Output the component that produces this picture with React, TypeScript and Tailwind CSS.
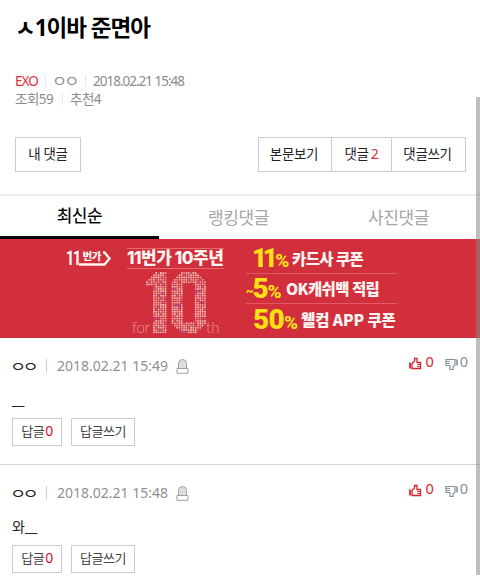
import type { ReactNode } from "react";

const SANS = "font-['Noto_Sans','Noto_Sans_CJK_KR',sans-serif]";

const DOT_COLORS = ["#f3b7ae", "#f0a9a2", "#f7cfc6", "#e58d96", "#b25a92", "#efb39a", "#f5c3bd"];

// Dot matrix for the "10" artwork, 26 columns x 27 rows
function isLit(col: number, row: number) {
    if (col < 9) {
        if (row < 6) return col >= Math.max(0, 4 - row);
        return col >= 3;
    }
    if (col < 11) return false;
    const edge = Math.min(row, 26 - row);
    const inset = Math.max(0, 4 - edge);
    const x = col - 11;
    if (x < inset || x > 14 - inset) return false;
    return !(x > 4 && x < 10 && edge > 4);
}

function DotTen() {
    const dots: ReactNode[] = [];
    for (let row = 0; row < 27; row++) {
        for (let col = 0; col < 26; col++) {
            if (!isLit(col, row)) continue;
            dots.push(
                <circle
                    key={`${col}-${row}`}
                    cx={1 + col * 2.32}
                    cy={1 + row * 2.28}
                    r={0.95}
                    fill={DOT_COLORS[(col * 5 + row * 11 + ((col * row) % 6)) % 7]}
                />
            );
        }
    }
    return (
        <svg width="60" height="62" viewBox="0 0 60 62" className="shrink-0">
            {dots}
        </svg>
    );
}

function Banner() {
    return (
        <div className="flex h-[99px] w-full bg-[#d12f3b] font-['Noto_Sans_CJK_KR',sans-serif] text-[#fff3f1] whitespace-nowrap">
            {/* 11st logo */}
            <div className="w-[127px] shrink-0 pt-[10px] pl-[66px]">
                <svg width="46" height="18" viewBox="0 0 46 18" fill="none" stroke="#fff3f1">
                    <path d="M1 4.5 4.5 3V16M8 4.5 11.5 3V16M13 15.5H38.5L43.5 9.5 38.5 3.5H37" strokeWidth="2.4" />
                    <text x="16.5" y="11" fontSize="10.5" fontWeight="900" stroke="none" fill="#fff3f1" textLength="19">
                        번가
                    </text>
                </svg>
            </div>
            {/* 10th anniversary */}
            <div className="w-[97px] shrink-0 pt-[9px]">
                <div className="flex h-[21px] items-center border-y border-[#e26a6c] font-['Inter','Noto_Sans_CJK_KR',sans-serif] text-[17px] leading-[19px] font-extrabold tracking-[-0.45px]">
                    11번가 10주년
                </div>
                <div className="flex items-end pt-[3px] pl-[5px] font-['Lato',sans-serif] text-[15px] leading-[14px] font-light text-[#ee9297]">
                    <span className="w-[14px] tracking-[-0.4px]">for</span>
                    <DotTen />
                    <span>th</span>
                </div>
            </div>
            {/* Coupons */}
            <div className="ml-[22px] w-[151px] pt-[5px] text-[15.5px] font-black tracking-[-0.6px]">
                <div className="flex h-[30px] items-center border-b border-[#e05a60] pl-[6px]">
                    <b className="w-[40px] font-['Roboto',sans-serif] text-[26px] tracking-[-4.4px] text-[#ffdf16]">
                        11<span className="pl-[2px] text-[19px]">%</span>
                    </b>
                    카드사 쿠폰
                </div>
                <div className="flex h-[30px] items-center border-b border-[#e05a60]">
                    <b className="w-[40px] font-['Roboto',sans-serif] text-[28px] tracking-[-1.2px] text-[#ffdf16]">
                        <span className="align-middle text-[12px]">~</span>5<span className="text-[19px]">%</span>
                    </b>
                    OK캐쉬백 적립
                </div>
                <div className="flex h-[31px] items-center pl-[7px] tracking-[-0.1px]">
                    <b className="w-[48px] font-['Roboto',sans-serif] text-[28px] tracking-[-0.7px] text-[#ffdf16]">
                        50<span className="text-[19px]">%</span>
                    </b>
                    웰컴 APP 쿠폰
                </div>
            </div>
        </div>
    );
}

function SirenIcon() {
    return (
        <svg width="13" height="15" viewBox="0 0 13 15" fill="#dedede" stroke="#a0a0a0">
            <path d="M2.5 9.5V4.5a4 4 0 0 1 8 0v5" />
            <path d="M1 9.5h11v4.8H1z" fill="#fff" />
        </svg>
    );
}

function ThumbUpIcon() {
    return (
        <svg width="13" height="13" viewBox="0 0 13 13" fill="none" stroke="#d8222b">
            <path d="M1 5.5v6" strokeWidth="1.8" />
            <path d="M3 11.5h8.5v-6H8V1.5H5.5V4L3 6.5z" strokeWidth="1.3" />
            <path d="M8 7.5h3.5M8 9.5h3.5" strokeWidth=".9" />
        </svg>
    );
}

function ThumbDownIcon() {
    return (
        <svg width="13" height="13" viewBox="0 0 13 13" fill="none" stroke="#82919c">
            <path d="M12 1.5v6" strokeWidth="1.6" />
            <path d="M10 1.5H1v6h4v4h3V9l2-2z" strokeWidth="1.2" />
            <path d="M1 3.5h4M1 5.5h4" strokeWidth=".9" />
        </svg>
    );
}

function Comment({ time, body }: { time: string; body: string }) {
    return (
        <div className="pt-[17px] pr-[12px] pb-[18px] pl-[12px]">
            <div className="flex h-[22px] items-center justify-between">
                <div className="flex items-center text-[14px] leading-[22px]">
                    <span className="w-[34px]">
                        <span className="-ml-[2px] inline-block origin-left scale-x-122 text-[14.5px] tracking-[-3px] text-[#222]">
                            ㅇㅇ
                        </span>
                    </span>
                    <span className="mr-[10px] h-[14px] w-px bg-[#d0d0d0]" />
                    <span className="mr-[9px] w-[110px] whitespace-nowrap text-[#8f8f8f]">{time}</span>
                    <SirenIcon />
                </div>
                <div className="flex h-[22px] items-start text-[14.5px] leading-[13px]">
                    <span className="flex text-[#d8222b]">
                        <span className="mr-[3px] pt-[2px]"><ThumbUpIcon /></span>0
                    </span>
                    <span className="ml-[11px] flex text-[#82919c]">
                        <span className="mr-[2px] pt-[3px]"><ThumbDownIcon /></span>0
                    </span>
                </div>
            </div>
            <p className="mt-[11px] mb-[6px] h-[24px] text-[14px] leading-[24px] text-[#222]">{body}</p>
            <div className="flex gap-[9px] text-[13px] leading-[20px] tracking-[-0.4px] text-[#444]">
                <button className="h-[28px] w-[50px] border border-[#ccc] pb-[3px] whitespace-nowrap">
                    답글<span className="ml-[1px] text-[14px] text-[#d3121c]">0</span>
                </button>
                <button className="h-[28px] w-[64px] border border-[#ccc] pb-[3px] whitespace-nowrap">답글쓰기</button>
            </div>
        </div>
    );
}

function Divider() {
    return <span className="h-[12px] w-px bg-[#e8e8e8]" />;
}

export default function App() {
    return (
        <div className={`relative h-[582px] w-[480px] overflow-hidden bg-white ${SANS}`}>
            <header className="h-[137px] pt-[12px] pl-[15px]">
                <h1 className="text-[22.5px] leading-[32px] font-bold tracking-[-1px] text-black">ㅅ1이바 준면아</h1>
                <div className="mt-[28px] flex h-[18px] items-center text-[13.5px] leading-[18px] tracking-[-1px] whitespace-nowrap text-[#8c8c8c]">
                    <span className="w-[30px] text-[#d9323b]">EXO</span>
                    <Divider />
                    <span className="ml-[6px] w-[33px]">
                        <span className="inline-block origin-left scale-x-122 tracking-[-2.3px]">ㅇㅇ</span>
                    </span>
                    <Divider />
                    <span className="ml-[7px]">2018.02.21 15:48</span>
                </div>
                <div className="flex h-[18px] items-center text-[13.5px] leading-[18px] tracking-[-0.5px] whitespace-nowrap text-[#8c8c8c]">
                    <span className="w-[47px]">조회59</span>
                    <Divider />
                    <span className="ml-[7px]">추천4</span>
                </div>
            </header>

            <div className="flex h-[57px] justify-between pr-[14px] pl-[15px] text-[13.5px] leading-[20px] tracking-[-0.35px] text-[#222]">
                <button className="h-[35px] w-[66px] border border-[#ccc] pb-[2px]">내 댓글</button>
                <div className="flex h-[35px] w-[208px] divide-x divide-[#ccc] border border-[#ccc]">
                    <button className="w-[73px] pr-[2px] pb-[2px]">본문보기</button>
                    <button className="w-[60px] pb-[2px]">
                        댓글 <span className="-ml-px text-[14px] text-[#d9323b]">2</span>
                    </button>
                    <button className="flex-1 pr-[2px] pb-[2px]">댓글쓰기</button>
                </div>
            </div>

            <nav className="flex h-[45px] border-t-2 border-[#eee] text-[17px] leading-[40px] tracking-[-0.4px] text-[#a5a5a5]">
                <button className="w-[159px] border-b-3 border-black tracking-[-0.4px] text-black [-webkit-text-stroke:0.2px]">
                    최신순
                </button>
                <button className="w-[159px]">랭킹댓글</button>
                <button className="w-[161px]">사진댓글</button>
            </nav>

            <Banner />

            <div className="divide-y divide-[#d4d4d4]">
                <Comment time="2018.02.21 15:49" body="__" />
                <Comment time="2018.02.21 15:48" body="와__" />
            </div>

            {/* Scrollbar thumb */}
            <div className="absolute top-[97px] right-0 h-[478px] w-[4px] bg-[#888]/55" />
        </div>
    );
}
